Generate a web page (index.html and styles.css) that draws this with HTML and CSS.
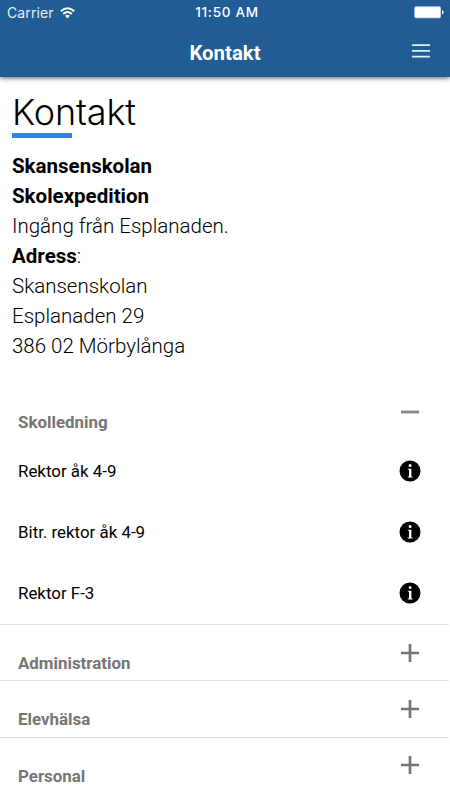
FILE: index.html
```html
<!DOCTYPE html>
<html lang="sv">
<head>
<meta charset="utf-8">
<title>Kontakt</title>
<link rel="stylesheet" href="styles.css">
</head>
<body>
<header class="top">
  <div class="status">
    <div class="carrier"><span>Carrier</span>
      <svg width="15" height="12" viewBox="0 0 15 12" fill="none" stroke="#fff" stroke-width="1.9"><path d="M.8 4.3Q7.5-1.8 14.2 4.3M3.2 7Q7.5 3.1 11.8 7"/><path d="M5.1 8.8Q7.5 6.9 9.9 8.8L7.5 11.4Z" fill="#fff" stroke="none"/></svg>
    </div>
    <time class="clock">11:50 AM</time>
    <svg class="battery" width="30" height="13" viewBox="0 0 30 13"><rect x=".2" y=".3" width="26.8" height="12" rx="2" fill="#b8d0e6"/><rect x="1" y="1.2" width="25.2" height="10.2" rx="1" fill="#fff"/><path d="M28 4.3Q29.6 4.5 29.6 6.3T28 8.3Z" fill="#fff"/></svg>
  </div>
  <div class="bar">
    <span class="bar-title">Kontakt</span>
    <svg class="menu" width="18" height="14" viewBox="0 0 18 14" fill="#e4edf5"><path d="M0 .2h18v1.8H0zM0 6h18v1.8H0zM0 11.8h18v1.8H0z"/></svg>
  </div>
</header>
<main>
  <section class="intro">
    <h1>Kontakt</h1>
    <div class="rule"></div>
    <div class="address">
      <div><b>Skansenskolan</b></div>
      <div><b>Skolexpedition</b></div>
      <div>Ingång från Esplanaden.</div>
      <div><b>Adress</b>:</div>
      <div>Skansenskolan</div>
      <div>Esplanaden 29</div>
      <div>386 02 Mörbylånga</div>
    </div>
  </section>
  <section class="groups">
    <div class="group open"><h2>Skolledning</h2><svg class="toggle" width="18" height="18" viewBox="0 0 18 18"><path d="M0 9h18" stroke="#858585" stroke-width="2.8"/></svg></div>
    <div class="person"><span>Rektor åk 4-9</span><svg class="info" width="22" height="22" viewBox="0 0 22 22"><circle cx="11" cy="11" r="10.5"/><path fill="#fff" d="M9.6 5.4a1.5 1.5 0 1 0 3 0a1.5 1.5 0 1 0-3 0M8.8 8.7h3.6v7.7l1.1.2v.8H8.8v-.8l1.2-.2V9.7l-1.2-.2z"/></svg></div>
    <div class="person"><span>Bitr. rektor åk 4-9</span><svg class="info" width="22" height="22" viewBox="0 0 22 22"><circle cx="11" cy="11" r="10.5"/><path fill="#fff" d="M9.6 5.4a1.5 1.5 0 1 0 3 0a1.5 1.5 0 1 0-3 0M8.8 8.7h3.6v7.7l1.1.2v.8H8.8v-.8l1.2-.2V9.7l-1.2-.2z"/></svg></div>
    <div class="person"><span>Rektor F-3</span><svg class="info" width="22" height="22" viewBox="0 0 22 22"><circle cx="11" cy="11" r="10.5"/><path fill="#fff" d="M9.6 5.4a1.5 1.5 0 1 0 3 0a1.5 1.5 0 1 0-3 0M8.8 8.7h3.6v7.7l1.1.2v.8H8.8v-.8l1.2-.2V9.7l-1.2-.2z"/></svg></div>
    <div class="group"><h2>Administration</h2><svg class="toggle" width="18" height="18" viewBox="0 0 18 18"><path d="M0 9h18M9 0v18" stroke="#757575" stroke-width="2.7"/></svg></div>
    <div class="group"><h2>Elevhälsa</h2><svg class="toggle" width="18" height="18" viewBox="0 0 18 18"><path d="M0 9h18M9 0v18" stroke="#757575" stroke-width="2.7"/></svg></div>
    <div class="group"><h2>Personal</h2><svg class="toggle" width="18" height="18" viewBox="0 0 18 18"><path d="M0 9h18M9 0v18" stroke="#757575" stroke-width="2.7"/></svg></div>
  </section>
</main>
</body>
</html>
```
FILE: styles.css
```css
* { box-sizing: border-box; }
body {
  margin: 0;
  height: 800px;
  overflow: hidden;
  background: #fff;
  color: #000;
  font-family: Roboto, sans-serif;
}
svg { display: block; flex: none; }
.top {
  height: 77px;
  background: #215c94;
  color: #fff;
  box-shadow: 0 1px 5px rgba(0, 0, 0, .65);
}
.status {
  display: grid;
  grid-template-columns: 1fr auto 1fr;
  align-items: center;
  height: 25px;
  padding: 0 6px 0 7px;
  font: 400 14px/25px Inter, sans-serif;
}
.carrier { display: flex; align-items: center; gap: 6px; color: #e7eff7; letter-spacing: .1px; }
.clock { font-size: 13.5px; font-weight: 500; letter-spacing: .7px; margin-left: 3px; }
.battery { justify-self: end; }
.bar {
  display: grid;
  grid-template-columns: 1fr auto 1fr;
  align-items: center;
  height: 52px;
  padding: 0 20px;
}
.bar-title { grid-column: 2; font-size: 20.4px; font-weight: 700; line-height: 52px; padding-top: 2px; }
.menu { justify-self: end; margin-bottom: 3px; }
.intro { height: 304px; padding: 13px 12px 0; }
h1 { margin: 0; padding-top: 1px; font: 300 36px/42px Inter, sans-serif; letter-spacing: -.15px; }
.rule { width: 60px; height: 5px; background: #3187da; }
.address { margin-top: 13px; font-size: 20.5px; font-weight: 300; line-height: 30px; }
b { font-weight: 700; }
.groups { width: 448.5px; }
.group {
  display: flex;
  align-items: flex-start;
  justify-content: space-between;
  height: 56.3px;
  border-top: 1px solid #dedede;
  padding: 18.5px 29.5px 0 18px;
}
.open { height: 59px; padding-top: 21px; border-color: transparent; }
h2 { margin: 9.5px 0 0; color: #757575; font-size: 16.9px; font-weight: 700; line-height: 20px; }
.open h2 { margin-top: 9px; }
.person {
  display: flex;
  align-items: center;
  justify-content: space-between;
  height: 61px;
  padding: 0 27.5px 0 18px;
  font-size: 16.9px;
}
.person span { padding-top: 1px; }
.person:nth-child(4) { height: 62px; }
.person:nth-child(4) span { padding-top: 0; }
```
